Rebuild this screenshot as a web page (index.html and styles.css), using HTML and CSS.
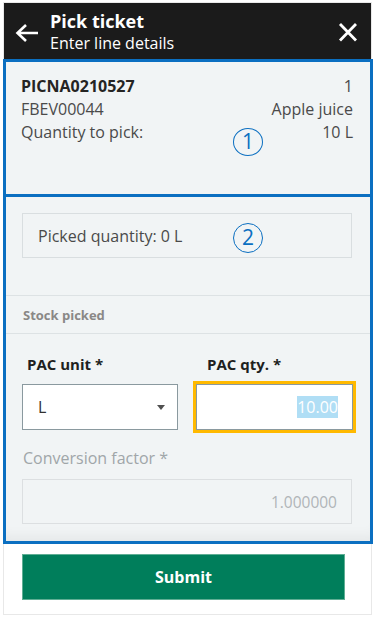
FILE: index.html
```html
<!DOCTYPE html>
<html lang="en">
<head>
    <meta charset="UTF-8">
    <meta name="viewport" content="width=device-width, initial-scale=1.0">
    <title>Pick ticket</title>
    <link rel="stylesheet" href="styles.css">
</head>
<body>
    <div class="frame">
        <header class="app-header">
            <svg class="back-icon" width="24" height="20" viewBox="0 0 24 20">
                <path d="M23 10H3M11 2L2.5 10L11 18" fill="none" stroke="#fff" stroke-width="2.6"/>
            </svg>
            <div class="titles">
                <div class="title">Pick ticket</div>
                <div class="subtitle">Enter line details</div>
            </div>
            <svg class="close-icon" width="20" height="19" viewBox="0 0 20 19">
                <path d="M2 1L18 17.5M18 1L2 17.5" fill="none" stroke="#fff" stroke-width="2.8"/>
            </svg>
        </header>

        <section class="zone zone-info">
            <div class="info-row">
                <span class="strong">PICNA0210527</span>
                <span>1</span>
            </div>
            <div class="info-row">
                <span>FBEV00044</span>
                <span>Apple juice</span>
            </div>
            <div class="info-row">
                <span>Quantity to pick:</span>
                <span>10 L</span>
            </div>
            <span class="marker marker-1">1</span>
        </section>

        <section class="zone zone-form">
            <div class="picked-box">Picked quantity: 0 L</div>
            <span class="marker marker-2">2</span>

            <div class="group-title">Stock picked</div>

            <div class="field-grid">
                <div class="field">
                    <label class="field-label">PAC unit *</label>
                    <div class="select-box">
                        <span>L</span>
                        <span class="caret"></span>
                    </div>
                </div>
                <div class="field">
                    <label class="field-label second">PAC qty. *</label>
                    <div class="input-box focused">
                        <span class="selected-text">10.00</span>
                    </div>
                </div>
            </div>

            <label class="field-label disabled">Conversion factor *</label>
            <div class="input-box readonly">1.000000</div>
        </section>

        <button class="submit-btn">Submit</button>
    </div>
</body>
</html>
```

FILE: styles.css
```css
body {
    margin: 0;
    background: #fff;
    font-family: "Open Sans", "Noto Sans", sans-serif;
    color: #323130;
}
.frame {
    margin: 2px 0 0 3px;
    width: 369px;
    height: 613px;
    box-sizing: border-box;
    border: 1px solid #e8e8e8;
}
.app-header {
    height: 56px;
    background: #1b1b1b;
    color: #fff;
    display: flex;
    align-items: flex-start;
    box-sizing: border-box;
    padding-top: 7px;
}
.back-icon {
    margin: 13px 0 0 11px;
}
.titles {
    margin-left: 11px;
    flex: 1;
}
.title {
    font-size: 18px;
    font-weight: bold;
    line-height: 22px;
}
.subtitle {
    font-size: 16px;
    line-height: 20px;
    margin-top: 1px;
}
.close-icon {
    margin: 13px 13px 0 0;
}
.zone {
    position: relative;
    width: 370px;
    margin-left: -1px;
    box-sizing: border-box;
    border: 3px solid #0b6fc1;
    background: #f1f4f5;
}
.zone-info {
    height: 138px;
    padding: 13px 17px 0 15px;
    font-size: 16px;
    color: #4a4a4a;
}
.info-row {
    display: flex;
    justify-content: space-between;
    line-height: 23px;
}
.strong {
    font-weight: bold;
    color: #252423;
}
.zone-form {
    height: 347px;
    border-top: 0;
    padding-top: 16px;
    box-shadow: inset 0 -14px 14px -10px rgba(0, 0, 0, 0.06);
}
.marker {
    position: absolute;
    left: 227px;
    width: 30px;
    height: 28px;
    box-sizing: border-box;
    border: 1.6px solid #0b6fc1;
    border-radius: 50%;
    color: #0b6fc1;
    font-size: 21px;
    line-height: 25px;
    text-align: center;
}
.marker-1 {
    top: 66px;
}
.marker-2 {
    top: 26px;
    height: 30px;
    line-height: 27px;
}
.picked-box {
    margin: 0 18px 0 16px;
    height: 45px;
    box-sizing: border-box;
    border: 1px solid #d9dee0;
    padding-left: 15px;
    display: flex;
    align-items: center;
    font-size: 16px;
    color: #4a4a4a;
}
.group-title {
    margin-top: 37px;
    height: 39px;
    box-sizing: border-box;
    border-top: 1px solid #dde2e4;
    border-bottom: 1px solid #dde2e4;
    padding-left: 17px;
    display: flex;
    align-items: center;
    font-size: 13px;
    font-weight: bold;
    color: #8a8886;
}
.field-grid {
    display: grid;
    grid-template-columns: 156px 157px;
    column-gap: 18px;
    margin: 20px 0 0 16px;
}
.field-label {
    display: block;
    font-size: 15px;
    font-weight: bold;
    line-height: 20px;
    padding-left: 5px;
    margin-bottom: 10px;
    color: #201f1e;
}
.field-label.second {
    padding-left: 11px;
}
.field-label.disabled {
    font-size: 16px;
    font-weight: normal;
    color: #a0a6a9;
    margin: 18px 0 11px 16px;
    padding-left: 1px;
}
.select-box {
    height: 46px;
    box-sizing: border-box;
    border: 1px solid #8a999f;
    background: #fff;
    display: flex;
    align-items: center;
    justify-content: space-between;
    padding: 0 12px 0 15px;
    font-size: 16px;
    color: #323130;
}
.caret {
    width: 0;
    height: 0;
    border-left: 4px solid transparent;
    border-right: 4px solid transparent;
    border-top: 5px solid #505050;
}
.input-box {
    height: 46px;
    box-sizing: border-box;
    border: 1px solid #8a999f;
    background: #fff;
    display: flex;
    align-items: center;
    justify-content: flex-end;
    padding-right: 14px;
    font-size: 16px;
}
.input-box.focused {
    outline: 3px solid #ffb900;
}
.selected-text {
    background: #b0def5;
    color: #fff;
    line-height: 22px;
}
.input-box.readonly {
    margin: 0 18px 0 16px;
    height: 45px;
    border-color: #dcdfe1;
    background: transparent;
    color: #b0b5b8;
    font-size: 15.5px;
}
.submit-btn {
    display: block;
    margin: 10px 0 0 18px;
    width: 323px;
    height: 46px;
    border: 1px solid #5fae94;
    background: #007e5b;
    color: #fff;
    font-family: "Open Sans", "Noto Sans", sans-serif;
    font-size: 16px;
    font-weight: bold;
}
```
